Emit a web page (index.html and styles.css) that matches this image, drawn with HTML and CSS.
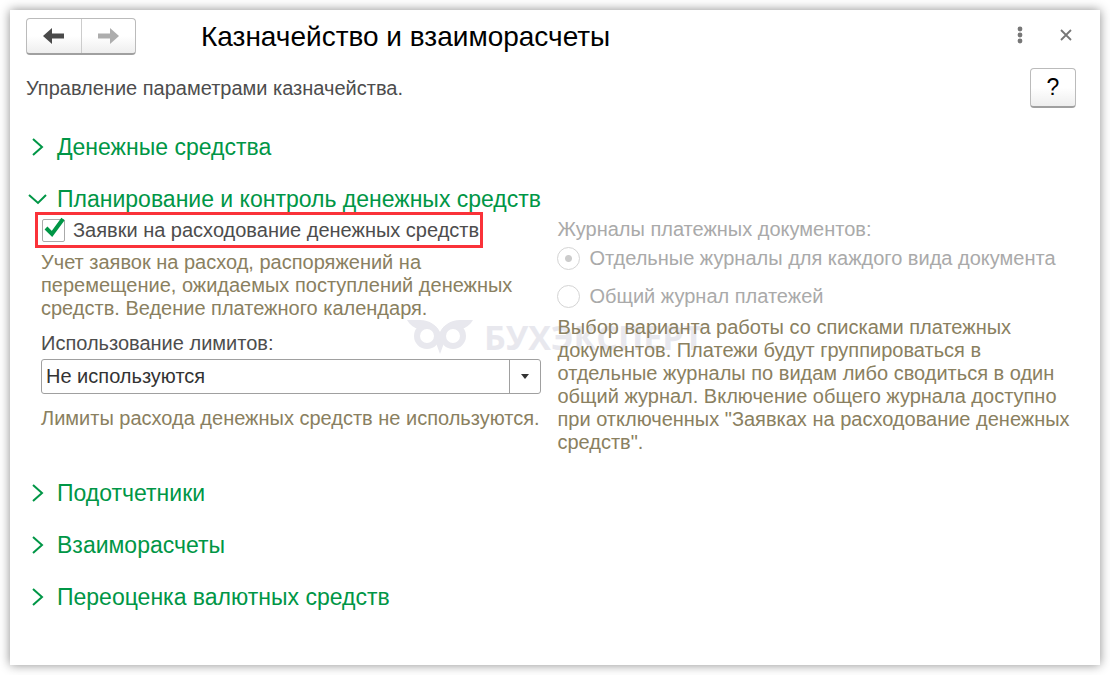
FILE: index.html
```
<!DOCTYPE html>
<html lang="ru">
<head>
    <meta charset="UTF-8">
    <meta name="viewport" content="width=device-width, initial-scale=1.0">
    <title>Казначейство и взаиморасчеты</title>
    <link rel="stylesheet" href="styles.css">
</head>
<body>
    <main class="window">
        <header class="topbar">
            <div class="nav-buttons">
                <button type="button" aria-label="Назад">
                    <svg width="22" height="16" viewBox="0 0 22 16"><path d="M0 8L9 0V5.6H21V10.4H9V16Z" fill="#4a4a4a"/></svg>
                </button>
                <button type="button" aria-label="Вперед">
                    <svg width="22" height="16" viewBox="0 0 22 16"><path d="M22 8L13 0V5.6H1V10.4H13V16Z" fill="#adadad"/></svg>
                </button>
            </div>
            <h1>Казначейство и взаиморасчеты</h1>
            <button type="button" class="icon-button" aria-label="Еще">
                <svg width="6" height="18" viewBox="0 0 6 18" fill="#777"><circle cx="3" cy="3" r="2.4"/><circle cx="3" cy="9" r="2.4"/><circle cx="3" cy="15" r="2.4"/></svg>
            </button>
            <button type="button" class="icon-button" aria-label="Закрыть">
                <svg width="12" height="12" viewBox="0 0 12 12"><path d="M1 1L11 11M11 1L1 11" stroke="#777" stroke-width="1.8"/></svg>
            </button>
        </header>

        <div class="intro">
            <p>Управление параметрами казначейства.</p>
            <button type="button" class="help-button">?</button>
        </div>

        <section>
            <h2><button type="button" class="toggle" aria-expanded="false"><svg width="20" height="20" viewBox="0 0 20 20"><path d="M5 2L14 10L5 18"/></svg>Денежные средства</button></h2>
        </section>

        <section>
            <h2><button type="button" class="toggle" aria-expanded="true"><svg width="20" height="20" viewBox="0 0 20 20"><path d="M1 6L10 14L18 6"/></svg>Планирование и контроль денежных средств</button></h2>
            <div class="settings">
                <div class="watermark" aria-hidden="true">
                    <svg width="66" height="34" viewBox="0 0 66 34">
                        <path d="M0 0H13C23 0 29 5 33 12C37 5 43 0 53 0H66C63 5 59 8 54 9L37 23L33 34L29 23L12 9C7 8 3 5 0 0Z" fill="#e8e8ee"/>
                        <circle cx="20" cy="16" r="10" fill="#fff" stroke="#e8e8ee" stroke-width="6"/>
                        <circle cx="46" cy="16" r="10" fill="#fff" stroke="#e8e8ee" stroke-width="6"/>
                    </svg>
                    <span>БУХЭКСПЕРТ</span>
                </div>

                <div class="column">
                    <label class="checkbox">
                        <input type="checkbox" checked>
                        <svg class="tick" width="24" height="24" viewBox="0 0 24 24"><path d="M4 11L10 17L21 2"/></svg>
                        Заявки на расходование денежных средств
                    </label>
                    <p class="hint">Учет заявок на расход, распоряжений на<br>перемещение, ожидаемых поступлений денежных<br>средств. Ведение платежного календаря.</p>
                    <label class="select-label" for="limits">Использование лимитов:</label>
                    <div class="select">
                        <select id="limits">
                            <option>Не используются</option>
                        </select>
                    </div>
                    <p class="hint">Лимиты расхода денежных средств не используются.</p>
                </div>

                <div class="column">
                    <fieldset disabled>
                        <legend>Журналы платежных документов:</legend>
                        <label class="radio"><input type="radio" name="journal" checked>Отдельные журналы для каждого вида документа</label>
                        <label class="radio"><input type="radio" name="journal">Общий журнал платежей</label>
                    </fieldset>
                    <p class="hint">Выбор варианта работы со списками платежных<br>документов. Платежи будут группироваться в<br>отдельные журналы по видам либо сводиться в один<br>общий журнал. Включение общего журнала доступно<br>при отключенных "Заявках на расходование денежных<br>средств".</p>
                </div>
            </div>
        </section>

        <section>
            <h2><button type="button" class="toggle" aria-expanded="false"><svg width="20" height="20" viewBox="0 0 20 20"><path d="M5 2L14 10L5 18"/></svg>Подотчетники</button></h2>
        </section>

        <section>
            <h2><button type="button" class="toggle" aria-expanded="false"><svg width="20" height="20" viewBox="0 0 20 20"><path d="M5 2L14 10L5 18"/></svg>Взаиморасчеты</button></h2>
        </section>

        <section>
            <h2><button type="button" class="toggle" aria-expanded="false"><svg width="20" height="20" viewBox="0 0 20 20"><path d="M5 2L14 10L5 18"/></svg>Переоценка валютных средств</button></h2>
        </section>
    </main>
</body>
</html>
```
FILE: styles.css
```
* {
    box-sizing: border-box;
}

body {
    margin: 0;
    padding: 10px;
    background-color: #fff;
    font-family: "Liberation Sans", Arial, sans-serif;
    font-size: 20px;
    line-height: 23px;
    color: #4d4d4d;
}

h1, h2, p {
    margin: 0;
    font-weight: normal;
}

button, select {
    font: inherit;
}

.window {
    min-height: calc(100vh - 20px);
    padding: 8px 24px 24px 16px;
    background-color: #fff;
    box-shadow: 0 0 10px rgba(0, 0, 0, 0.45);
}

/* Header */
.topbar {
    display: flex;
    align-items: center;
}

.topbar h1 {
    flex: 1;
    margin-left: 65px;
    font-size: 28px;
    line-height: 36px;
    color: #000;
}

.nav-buttons {
    display: flex;
    width: 110px;
    height: 37px;
    border: 1px solid #bbb;
    border-bottom: 2px solid #a0a0a0;
    border-radius: 4px;
    background: linear-gradient(#fff 50%, #eee);
}

.nav-buttons button {
    flex: 1;
    display: flex;
    align-items: center;
    justify-content: center;
    padding: 0;
    border: none;
    background: none;
}

.nav-buttons button + button {
    border-left: 1px solid #ccc;
}

.icon-button {
    display: flex;
    align-items: center;
    justify-content: center;
    width: 20px;
    height: 24px;
    margin: 0 0 4px 26px;
    padding: 0;
    border: none;
    background: none;
}

.intro {
    display: flex;
    align-items: center;
    justify-content: space-between;
    margin-top: 13px;
}

.help-button {
    width: 46px;
    height: 40px;
    padding: 0;
    border: 1px solid #bbb;
    border-bottom: 2px solid #a0a0a0;
    border-radius: 4px;
    background: linear-gradient(#fff 50%, #eee);
    font-size: 23px;
    color: #000;
}

/* Collapsible groups */
section {
    margin-top: 26px;
}

.toggle {
    display: flex;
    align-items: center;
    gap: 9px;
    padding: 0 0 0 2px;
    border: none;
    background: none;
    font-size: 23px;
    line-height: 26px;
    color: #009646;
}

.toggle svg {
    fill: none;
    stroke: #009646;
    stroke-width: 2;
}

.settings {
    position: relative;
    display: grid;
    grid-template-columns: 500fr 518fr;
    gap: 16px;
    padding-left: 15px;
}

.column {
    position: relative;
    white-space: nowrap;
}

.hint {
    color: #8a8060;
}

.checkbox {
    display: flex;
    align-items: center;
    position: relative;
    width: 448px;
    height: 36px;
    margin: 0 0 3px -6px;
    padding-left: 4px;
    gap: 8px;
    border: 3px solid #fa3239;
}

.checkbox input {
    appearance: none;
    width: 23px;
    height: 23px;
    margin: 0;
    border: 1px solid #aaa;
    border-radius: 2px;
    background-color: #fff;
}

.tick {
    position: absolute;
    left: 4px;
    top: 2px;
    fill: none;
    stroke: #009646;
    stroke-width: 4;
    visibility: hidden;
}

.checkbox input:checked + .tick {
    visibility: visible;
}

.select-label {
    display: block;
    margin: 12px 0 4px;
}

.select {
    position: relative;
    margin-bottom: 13px;
}

.select select {
    appearance: none;
    display: block;
    width: 100%;
    height: 35px;
    padding: 0 40px 0 4px;
    border: 1px solid #a0a0a0;
    border-radius: 3px;
    background-color: #fff;
    color: #333;
}

/* Drop-down arrow with its divider */
.select::before {
    content: "";
    position: absolute;
    top: 0;
    bottom: 0;
    right: 31px;
    border-left: 1px solid #a0a0a0;
}

.select::after {
    content: "";
    position: absolute;
    top: 15px;
    right: 12px;
    border: 4px solid transparent;
    border-top: 5px solid #333;
    border-bottom: none;
}

fieldset {
    margin: 0;
    padding: 0;
    border: none;
    color: #aaa;
}

legend {
    padding: 6px 0 0;
}

.radio {
    display: flex;
    align-items: center;
    gap: 9px;
    height: 23px;
    margin: 6px 0 15px;
}

.radio + .radio {
    margin-bottom: 8px;
}

.radio input {
    appearance: none;
    width: 23px;
    height: 23px;
    margin: 0;
    border: 1px solid #d4d4d4;
    border-radius: 50%;
}

.radio input:checked {
    background: radial-gradient(circle, #ccc 3px, #fff 4px);
}

.watermark {
    position: absolute;
    left: 381px;
    top: 108px;
    display: flex;
    align-items: center;
    gap: 11px;
    font-family: "Open Sans", sans-serif;
    font-size: 34px;
    font-weight: bold;
    line-height: 34px;
    color: #e8e8ee;
}
```
